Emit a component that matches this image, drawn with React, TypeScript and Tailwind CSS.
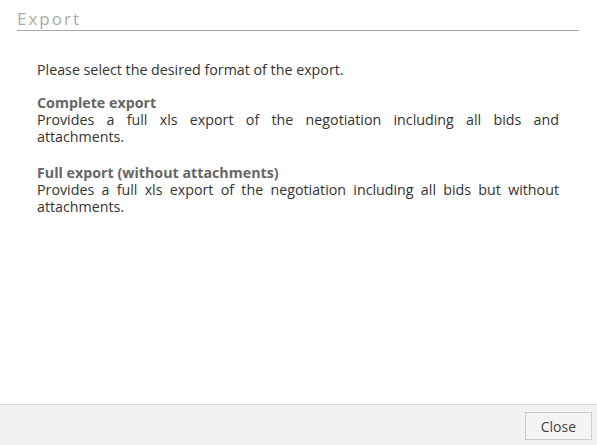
export default function App() {
  return (
    <div
      className="w-[597px] h-[445px] flex flex-col bg-white text-[#333]"
      style={{ fontFamily: '"Open Sans", "Liberation Sans", sans-serif' }}
    >
      <div className="px-[17px] pr-[18px] pt-[8px]">
        <div className="text-[17px] leading-[22px] tracking-[2px] text-[#aaa] border-b border-[#aaa]">
          Export
        </div>
      </div>
      <div className="flex-1 pl-[37px] pr-[38px] pt-[30px] text-[14.25px] leading-[17px]">
        <p>Please select the desired format of the export.</p>
        <div className="mt-[16px]">
          <p className="font-bold text-[#666]">Complete export</p>
          <p className="text-justify">
            Provides a full xls export of the negotiation including all bids and{" "}
            <span className="inline-block pr-[10px]">attachments.</span>
          </p>
        </div>
        <div className="mt-[19px]">
          <p className="font-bold text-[#666]">Full export (without attachments)</p>
          <p className="text-justify">
            Provides a full xls export of the negotiation including all bids but without attachments.
          </p>
        </div>
      </div>
      <div className="h-[41px] border-t border-[#ddd] bg-[#f1f1f1] flex items-center justify-end pr-[5px]">
        <button className="h-[28px] px-[15px] mt-[2px] border border-[#ccc] bg-[#f4f4f4] text-[14px] text-[#444]">
          Close
        </button>
      </div>
    </div>
  );
}
